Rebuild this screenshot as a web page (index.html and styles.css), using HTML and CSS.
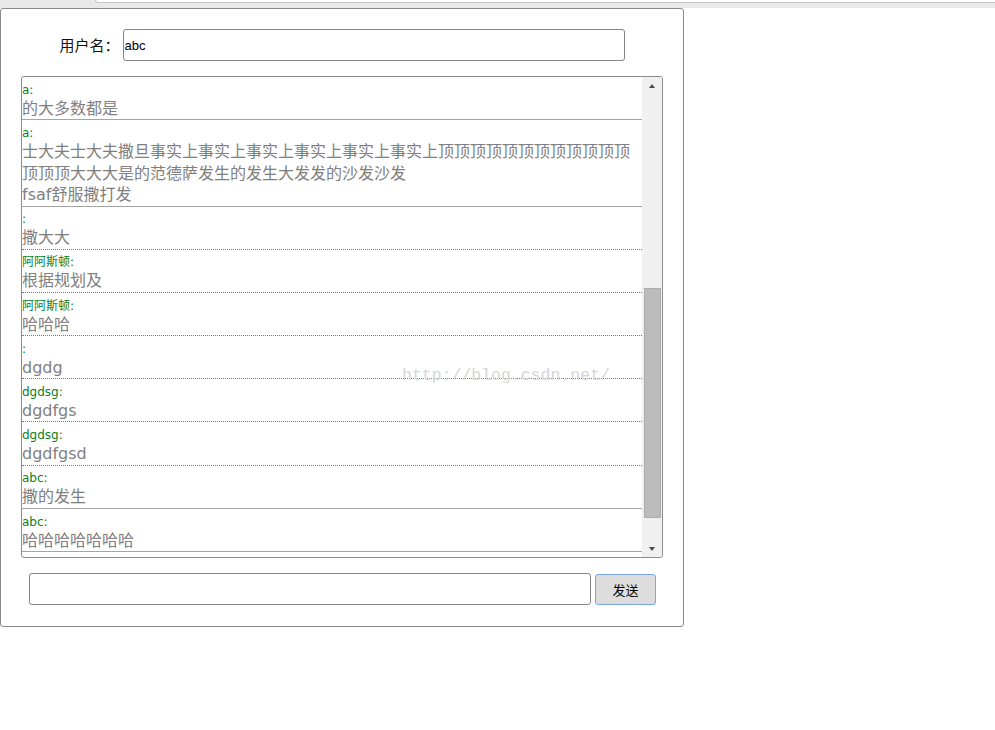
FILE: index.html
```html
<!DOCTYPE html>
<html lang="zh">
<head>
<meta charset="utf-8">
<title>聊天室</title>
<link rel="stylesheet" href="styles.css">
</head>
<body>
<div class="topbar"><div class="topfield"></div></div>
<div class="panel">
  <div class="user-row">
    <label class="user-label" for="uname">用户名：</label>
    <input id="uname" class="user-input" type="text" value="abc">
  </div>
  <div class="chatbox">
    <div class="messages">
      <div class="msg solid"><div class="name">a:</div><div class="text">的大多数都是</div></div>
      <div class="msg solid"><div class="name">a:</div><div class="text">士大夫士大夫撒旦事实上事实上事实上事实上事实上事实上顶顶顶顶顶顶顶顶顶顶顶顶顶顶顶大大大是的范德萨发生的发生大发发的沙发沙发<br>fsaf舒服撒打发</div></div>
      <div class="msg"><div class="name">:</div><div class="text">撒大大</div></div>
      <div class="msg"><div class="name">阿阿斯顿:</div><div class="text">根据规划及</div></div>
      <div class="msg"><div class="name">阿阿斯顿:</div><div class="text">哈哈哈</div></div>
      <div class="msg"><div class="name">:</div><div class="text">dgdg</div></div>
      <div class="msg"><div class="name">dgdsg:</div><div class="text">dgdfgs</div></div>
      <div class="msg"><div class="name">dgdsg:</div><div class="text">dgdfgsd</div></div>
      <div class="msg solid"><div class="name">abc:</div><div class="text">撒的发生</div></div>
      <div class="msg solid"><div class="name">abc:</div><div class="text">哈哈哈哈哈哈哈</div></div>
    </div>
    <div class="scrollbar">
      <div class="sb-btn"><span class="arrow-up"></span></div>
      <div class="sb-track"><div class="sb-thumb"></div></div>
      <div class="sb-btn"><span class="arrow-down"></span></div>
    </div>
  </div>
  <div class="send-row">
    <input class="send-input" type="text">
    <button class="send-btn" type="button">发送</button>
  </div>
</div>
<div class="watermark">http://blog.csdn.net/</div>
</body>
</html>
```

FILE: styles.css
```css
html, body {
  margin: 0;
  padding: 0;
  background: #ffffff;
}
body {
  position: relative;
  font-family: "DejaVu Sans", "Noto Sans CJK SC", sans-serif;
}
.topbar {
  height: 8px;
  background: #e9e9e9;
}
.topfield {
  margin-left: 95px;
  height: 2px;
  background: #ffffff;
  border-left: 1px solid #c6c6c6;
  border-bottom: 1px solid #c6c6c6;
  border-bottom-left-radius: 3px;
}
.panel {
  width: 684px;
  box-sizing: border-box;
  border: 1px solid #8a8a8a;
  border-radius: 3px;
  padding: 20px 0 21px;
}
.user-row {
  display: flex;
  justify-content: center;
  align-items: center;
  gap: 3px;
}
.user-label {
  font-family: "Noto Sans CJK SC", sans-serif;
  font-size: 15px;
  line-height: 20px;
  color: #111;
}
.user-input {
  width: 502px;
  height: 32px;
  box-sizing: border-box;
  border: 1px solid #868686;
  border-radius: 3px;
  padding: 0 1px;
  margin: 0;
  font-family: "Liberation Sans", sans-serif;
  font-size: 13px;
  color: #000;
  outline: none;
}
.chatbox {
  margin: 15px 20px;
  height: 482px;
  box-sizing: border-box;
  border: 1px solid #8c8c8c;
  border-radius: 3px;
  display: flex;
  overflow: hidden;
}
.messages {
  flex: 1;
  min-width: 0;
  overflow: hidden;
  display: flex;
  flex-direction: column;
  justify-content: flex-end;
  padding-bottom: 5px;
}
.msg {
  flex: none;
  border-bottom: 1px dotted #7a7a7a;
}
.msg.solid {
  border-bottom: 1px solid #a3a3a3;
}
.name {
  padding-top: 4.7px;
  font-size: 12px;
  line-height: 16px;
  color: #0a7f1e;
}
.text {
  font-size: 16px;
  line-height: 21.5px;
  color: #808080;
}
.scrollbar {
  width: 20px;
  flex: none;
  background: #f0f0f0;
  display: flex;
  flex-direction: column;
}
.sb-btn {
  height: 17px;
  display: flex;
  align-items: center;
  justify-content: center;
}
.arrow-up {
  width: 0;
  height: 0;
  border-left: 3.5px solid transparent;
  border-right: 3.5px solid transparent;
  border-bottom: 4px solid #4a4a4a;
}
.arrow-down {
  width: 0;
  height: 0;
  border-left: 3.5px solid transparent;
  border-right: 3.5px solid transparent;
  border-top: 4px solid #4a4a4a;
}
.sb-track {
  flex: 1;
  display: flex;
  flex-direction: column;
}
.sb-thumb {
  margin: auto 1px 22px 2px;
  height: 230px;
  box-sizing: border-box;
  background: #bcbcbc;
  border: 1px solid #adadad;
}
.send-row {
  display: flex;
  justify-content: center;
  align-items: center;
  gap: 4px;
  padding-left: 1px;
}
.send-input {
  width: 562px;
  height: 32px;
  box-sizing: border-box;
  border: 1px solid #868686;
  border-radius: 3px;
  margin: 0;
  padding: 0 1px;
  outline: none;
}
.send-btn {
  width: 61px;
  height: 31px;
  box-sizing: border-box;
  margin: 0;
  padding: 0;
  background: #dddddd;
  border: 1px solid #7aa6e4;
  border-radius: 3px;
  font-family: "Noto Sans CJK SC", sans-serif;
  font-size: 13px;
  color: #000;
}
.watermark {
  position: absolute;
  left: 402px;
  top: 366px;
  font-family: "Liberation Mono", monospace;
  font-size: 16.5px;
  line-height: 20px;
  color: #d6d6d6;
  pointer-events: none;
}
```
